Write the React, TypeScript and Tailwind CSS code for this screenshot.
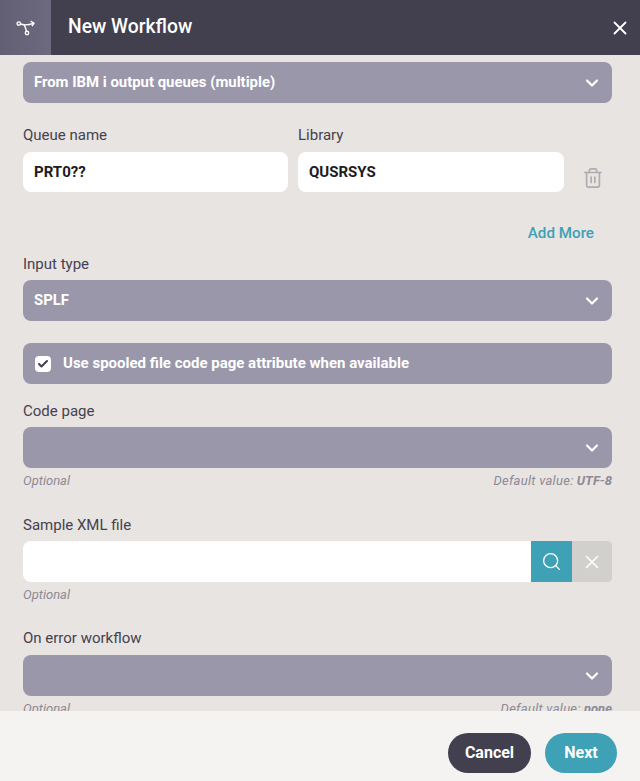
import { Check, ChevronDown, Search, Trash2, X } from "lucide-react";

const font = { fontFamily: "Roboto, sans-serif" };

function Select({ value, className = "" }: { value?: string; className?: string }) {
  return (
    <div className={`flex h-[41px] items-center justify-between rounded-[8px] bg-[#9a97aa] pl-[11px] pr-[10px] text-[14.9px] font-bold text-white ${className}`}>
      <span>{value}</span>
      <ChevronDown size={20} strokeWidth={2.6} className="text-white" />
    </div>
  );
}

function Label({ children, className = "" }: { children: string; className?: string }) {
  return <div className={`h-[17px] text-[15px] leading-[17px] text-[#45414f] ${className}`}>{children}</div>;
}

function Hint({ right }: { right?: [string, string] }) {
  return (
    <div className="mt-[5px] flex h-[15px] items-center justify-between text-[13px] italic leading-[15px] text-[#8c8a96]">
      <span>Optional</span>
      {right && (
        <span>
          <span className="tracking-[0.28px]">{right[0]}</span> <b className="font-bold">{right[1]}</b>
        </span>
      )}
    </div>
  );
}

function WorkflowIcon() {
  return (
    <svg width="20" height="18" viewBox="0 0 20 18" fill="none" stroke="white" strokeWidth="1.4">
      <circle cx="2.8" cy="4.6" r="1.7" />
      <circle cx="11" cy="14" r="1.7" />
      <path d="M4.5 5 C8 6.4 12 6.2 17.5 4.4" />
      <path d="M8.5 6 L10.5 12.3" />
      <path d="M14.6 2.2 L18 4.2 L16 7.2" />
    </svg>
  );
}

export default function App() {
  return (
    <div style={font} className="flex h-[781px] w-[640px] flex-col overflow-hidden bg-[#e8e4e1]">
      <header className="flex h-[55px] shrink-0 items-center bg-[#423f4e] text-white">
        <div className="flex h-full w-[51px] items-center justify-center bg-gradient-to-r from-[#625f74] to-[#6d6a80]">
          <WorkflowIcon />
        </div>
        <div className="ml-[17px] flex-1 text-[19.3px] font-medium">New Workflow</div>
        <X size={22} strokeWidth={2} className="mr-[9px]" />
      </header>

      <main className="h-[656px] shrink-0 overflow-hidden pl-[23px] pr-[28px] pt-[7px]">
        <Select value="From IBM i output queues (multiple)" />

        <div className="mt-[24px] flex items-start">
          <div className="w-[265px]">
            <Label>Queue name</Label>
            <div className="mt-[8px] flex h-[40px] items-center rounded-[8px] bg-white pl-[11px] text-[15px] font-bold text-[#1c1b22]">PRT0??</div>
          </div>
          <div className="ml-[10px] w-[266px]">
            <Label>Library</Label>
            <div className="mt-[8px] flex h-[40px] items-center rounded-[8px] bg-white pl-[11px] text-[15px] font-bold text-[#1c1b22]">QUSRSYS</div>
          </div>
          <Trash2 size={22} strokeWidth={1.8} className="ml-[18px] mt-[40px] text-[#aeacb1]" />
        </div>

        <div className="mt-[32px] flex h-[18px] items-center justify-end pr-[18px] text-[15.2px] font-medium text-[#3ea1b6]">Add More</div>

        <Label className="mt-[14px]">Input type</Label>
        <Select value="SPLF" className="mt-[7px]" />

        <div className="mt-[22px] flex h-[41px] items-center rounded-[8px] bg-[#9a97aa] pl-[12px] text-[15px] font-bold text-white">
          <div className="flex h-[16px] w-[16px] items-center justify-center rounded-[4px] bg-white">
            <Check size={12} strokeWidth={4} className="text-[#423f4e]" />
          </div>
          <span className="ml-[12px]">Use spooled file code page attribute when available</span>
        </div>

        <Label className="mt-[19px]">Code page</Label>
        <Select className="mt-[7px]" />
        <Hint right={["Default value:", "UTF-8"]} />

        <Label className="mt-[29px]">Sample XML file</Label>
        <div className="mt-[7px] flex h-[41px] overflow-hidden rounded-r-[4px] rounded-l-[8px] bg-white">
          <div className="flex-1" />
          <div className="flex w-[41px] items-center justify-center bg-[#3ea1b6] text-white">
            <Search size={21} strokeWidth={1.5} />
          </div>
          <div className="flex w-[40px] items-center justify-center bg-[#d2d0cd] text-white">
            <X size={22} strokeWidth={1.7} />
          </div>
        </div>
        <Hint />

        <Label className="mt-[28px]">On error workflow</Label>
        <Select className="mt-[8px]" />
        <Hint right={["Default value:", "none"]} />
      </main>

      <footer className="flex h-[70px] shrink-0 items-start justify-end gap-[14px] bg-[#f4f3f1] pr-[23px] pt-[22px] text-[16px] font-bold text-white">
        <button className="h-[40px] w-[83px] rounded-full bg-[#423f4e]">Cancel</button>
        <button className="h-[40px] w-[72px] rounded-full bg-[#3ea1b6]">Next</button>
      </footer>
    </div>
  );
}
